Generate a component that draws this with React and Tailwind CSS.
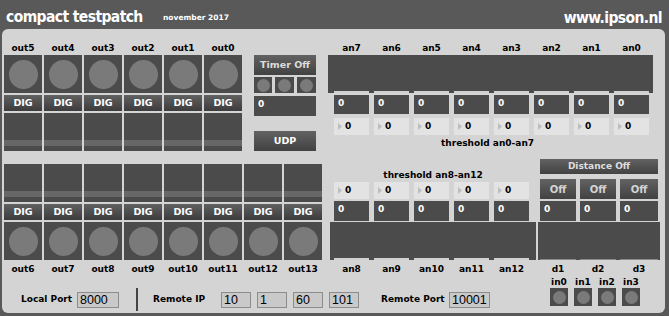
import React from 'react';

const topOuts = ['out5', 'out4', 'out3', 'out2', 'out1', 'out0'];
const bottomOuts = ['out6', 'out7', 'out8', 'out9', 'out10', 'out11', 'out12', 'out13'];
const topAn = ['an7', 'an6', 'an5', 'an4', 'an3', 'an2', 'an1', 'an0'];
const bottomAn = ['an8', 'an9', 'an10', 'an11', 'an12'];
const dCols = [
  { id: 'd1', w: 'w-[36px]' },
  { id: 'd2', w: 'w-[36px]' },
  { id: 'd3', w: 'w-[38px]' },
];

function CircleBox() {
  return (
    <div className="flex h-[38px] w-[38px] items-center justify-center bg-[#4b4b4b]">
      <div className="h-[29px] w-[29px] rounded-full bg-[#7a7a7a]" />
    </div>
  );
}

function Dig() {
  return (
    <div className="flex h-[16px] items-center justify-center bg-gradient-to-b from-[#616161] to-[#3c3c3c] text-[9.5px] font-bold text-white">
      DIG
    </div>
  );
}

function Slider() {
  return (
    <div className="flex h-[38px] flex-col bg-[#4b4b4b]">
      <div className="mt-[27px] h-[6px] bg-[#676767]" />
    </div>
  );
}

function NumBox({ w = 'w-[35px]', h = 'h-[20px]' }) {
  return (
    <div className={`${w} ${h} bg-[#4b4b4b] pl-[4px] pt-[3px] text-[9px] font-bold leading-[10px] text-white`}>0</div>
  );
}

function Thresh() {
  return (
    <div className="flex h-[17px] w-[35px] items-center bg-[#e3e3e3] pl-[4px]">
      <svg width="4" height="7" viewBox="0 0 4 7">
        <path d="M0 0L4 3.5L0 7z" fill="#bdbdbd" />
      </svg>
      <span className="ml-[3px] text-[9px] font-bold leading-none text-black">0</span>
    </div>
  );
}

function DarkButton({ children, className }) {
  return (
    <div className={`flex items-center justify-center bg-gradient-to-b from-[#626262] to-[#424242] font-bold ${className}`}>
      {children}
    </div>
  );
}

function SmallBall() {
  return (
    <div className="flex h-[18px] w-[18px] items-center justify-center bg-[#4b4b4b]">
      <div className="h-[13px] w-[13px] rounded-full bg-[#7a7a7a]" />
    </div>
  );
}

function Field({ w, children }) {
  return (
    <div className={`${w} h-[16px] border border-[#8c8c8c] bg-[#c9c9c9] pl-[2px] font-['Liberation_Sans',sans-serif] text-[12.5px] leading-[14px] text-black`}>
      {children}
    </div>
  );
}

export default function App() {
  return (
    <div className="h-[316px] w-[669px] overflow-hidden bg-[#595959] font-['DejaVu_Sans',sans-serif]">
      {/* header */}
      <div className="flex h-[29px] items-start text-white">
        <div className="mt-[10px] w-[163px] pl-[6px] font-['DejaVu_Sans_Condensed','DejaVu_Sans',sans-serif] text-[15.5px] font-bold leading-none tracking-[-0.6px]">compact testpatch</div>
        <div className="mt-[14px] text-[7.5px] font-bold leading-none">november 2017</div>
        <div className="ml-auto mt-[11px] pr-[7px] font-['DejaVu_Sans_Condensed','DejaVu_Sans',sans-serif] text-[15.5px] font-bold leading-none tracking-[-0.6px]">www.ipson.nl</div>
      </div>

      {/* panel */}
      <div className="ml-[2px] h-[284px] w-[663px] rounded-[6px] bg-[#d4d4d4] pt-[13px]">
        {/* row A */}
        <div className="flex items-start pl-[2px]">
          <div className="flex gap-[2px]">
            {topOuts.map((n) => (
              <div key={n} className="flex w-[38px] flex-col">
                <div className="h-[13px] text-center text-[9px] font-bold leading-[13px] text-black">{n}</div>
                <CircleBox />
                <div className="mt-[2px]"><Dig /></div>
                <div className="mt-[2px]"><Slider /></div>
              </div>
            ))}
          </div>

          <div className="ml-[12px] mt-[13px] flex w-[62px] flex-col">
            <DarkButton className="h-[20px] text-[9.5px] text-[#dcdcdc]">Timer Off</DarkButton>
            <div className="mt-[2px] flex gap-[3px]">
              <div className="flex h-[16px] w-[18px] items-center justify-center bg-[#4b4b4b]"><div className="h-[13px] w-[13px] rounded-full bg-[#7a7a7a]" /></div>
              <div className="flex h-[16px] w-[19px] items-center justify-center bg-[#4b4b4b]"><div className="h-[13px] w-[13px] rounded-full bg-[#7a7a7a]" /></div>
              <div className="flex h-[16px] w-[19px] items-center justify-center bg-[#4b4b4b]"><div className="h-[13px] w-[13px] rounded-full bg-[#7a7a7a]" /></div>
            </div>
            <div className="mt-[3px]"><NumBox w="w-[62px]" h="h-[20px]" /></div>
            <DarkButton className="mt-[15px] h-[20px] text-[9.5px] text-white">UDP</DarkButton>
          </div>

          <div className="ml-[12px] flex w-[325px] flex-col">
            <div className="flex gap-[5px] pl-[6px]">
              {topAn.map((n) => (
                <div key={n} className="h-[13px] w-[35px] text-center text-[9px] font-bold leading-[13px] text-black">{n}</div>
              ))}
            </div>
            <div className="flex h-[38px] items-end gap-[5px] bg-[#4b4b4b] pl-[6px]">
              {topAn.map((n) => (
                <div key={n} className="h-[2px] w-[35px] bg-[#d0d0d0]" />
              ))}
            </div>
            <div className="mt-[2px] flex gap-[5px] pl-[6px]">
              {topAn.map((n) => (
                <NumBox key={n} h="h-[19px]" />
              ))}
            </div>
            <div className="mt-[4px] flex gap-[5px] pl-[6px]">
              {topAn.map((n) => (
                <Thresh key={n} />
              ))}
            </div>
            <div className="mt-[2px] h-[12px] pl-[113px] text-[9px] font-bold leading-[12px] text-black">threshold an0-an7</div>
          </div>
        </div>

        {/* row B */}
        <div className="mt-[8px] flex items-start pl-[2px]">
          <div className="flex gap-[2px] pt-[5px]">
            {bottomOuts.map((n) => (
              <div key={n} className="flex w-[38px] flex-col">
                <Slider />
                <div className="mt-[2px]"><Dig /></div>
                <div className="mt-[2px]"><CircleBox /></div>
                <div className="mt-[3px] h-[13px] text-center text-[9px] font-bold leading-[13px] text-black">{n}</div>
              </div>
            ))}
          </div>

          <div className="ml-[8px] flex w-[206px] flex-col pt-[10px]">
            <div className="h-[12px] text-center text-[9px] font-bold leading-[12px] text-black">threshold an8-an12</div>
            <div className="mt-[1px] flex gap-[5px] pl-[4px]">
              {bottomAn.map((n) => (
                <Thresh key={n} />
              ))}
            </div>
            <div className="mt-[2px] flex gap-[5px] pl-[4px]">
              {bottomAn.map((n) => (
                <NumBox key={n} />
              ))}
            </div>
            <div className="mt-[1px] flex h-[38px] items-end gap-[5px] bg-[#4b4b4b] pl-[4px]">
              {bottomAn.map((n) => (
                <div key={n} className="h-[2px] w-[35px] bg-[#d0d0d0]" />
              ))}
            </div>
            <div className="mt-[3px] flex gap-[5px] pl-[4px]">
              {bottomAn.map((n) => (
                <div key={n} className="h-[13px] w-[35px] text-center text-[9px] font-bold leading-[13px] text-black">{n}</div>
              ))}
            </div>
          </div>

          <div className="ml-[2px] flex w-[122px] flex-col">
            <DarkButton className="mx-[2px] h-[15px] text-[9px] text-[#dedede]">Distance Off</DarkButton>
            <div className="mt-[5px] flex gap-[4px] pl-[2px]">
              {dCols.map((d) => (
                <DarkButton key={d.id} className={`${d.w} h-[20px] text-[10px] text-[#d4d4d4]`}>Off</DarkButton>
              ))}
            </div>
            <div className="mt-[2px] flex gap-[4px] pl-[2px]">
              {dCols.map((d) => (
                <NumBox key={d.id} w={d.w} />
              ))}
            </div>
            <div className="mt-[1px] flex h-[38px] items-end gap-[4px] bg-[#4b4b4b] pl-[2px]">
              {dCols.map((d) => (
                <div key={d.id} className={`${d.w} h-[1px] bg-[#8a8a8a]`} />
              ))}
            </div>
            <div className="mt-[3px] flex gap-[4px] pl-[2px]">
              {dCols.map((d) => (
                <div key={d.id} className={`${d.w} h-[13px] text-center text-[9px] font-bold leading-[13px] text-black`}>{d.id}</div>
              ))}
            </div>
          </div>
        </div>

        {/* row C */}
        <div className="flex items-start">
          <div className="mt-[12px] flex h-[23px] items-center pl-[19px]">
            <div className="w-[56px] text-[9px] font-bold text-black">Local Port</div>
            <Field w="w-[42px]">8000</Field>
            <div className="ml-[17px] h-[23px] w-[2px] bg-[#444444]" />
            <div className="ml-[15px] w-[68px] text-[9px] font-bold text-black">Remote IP</div>
            <Field w="w-[30px]">10</Field>
            <div className="ml-[6px]"><Field w="w-[30px]">1</Field></div>
            <div className="ml-[6px]"><Field w="w-[30px]">60</Field></div>
            <div className="ml-[6px]"><Field w="w-[30px]">101</Field></div>
            <div className="ml-[22px] w-[68px] text-[9px] font-bold text-black">Remote Port</div>
            <Field w="w-[41px]">10001</Field>
          </div>
          <div className="ml-[60px] flex flex-col">
            <div className="flex gap-[6px]">
              {['in0', 'in1', 'in2', 'in3'].map((n) => (
                <div key={n} className="h-[12px] w-[18px] text-center text-[9px] font-bold leading-[12px] text-black">{n}</div>
              ))}
            </div>
            <div className="flex gap-[6px]">
              {['in0', 'in1', 'in2', 'in3'].map((n) => (
                <SmallBall key={n} />
              ))}
            </div>
          </div>
        </div>
      </div>
    </div>
  );
}
